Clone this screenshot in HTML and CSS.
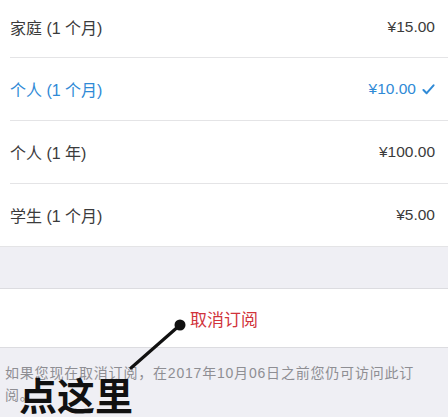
FILE: index.html
```html
<!DOCTYPE html>
<html lang="zh-CN">

<head>
    <meta charset="UTF-8">
    <meta name="viewport" content="width=device-width, initial-scale=1.0">
    <title>订阅</title>
    <link rel="stylesheet" href="styles.css">
</head>

<body>
    <!-- Plan list -->
    <ul class="plan-list">
        <li class="plan">
            <span class="plan-name">家庭 (1 个月)</span>
            <span class="plan-price">¥15.00</span>
        </li>
        <li class="plan selected">
            <span class="plan-name">个人 (1 个月)</span>
            <span class="plan-price">¥10.00
                <svg class="check" viewBox="0 0 14 12" width="13" height="11">
                    <path d="M1.5 6.5 L5 10 L12.5 1.5" fill="none" stroke="#2f8ad6" stroke-width="2.2" stroke-linecap="round" stroke-linejoin="round"/>
                </svg>
            </span>
        </li>
        <li class="plan">
            <span class="plan-name">个人 (1 年)</span>
            <span class="plan-price">¥100.00</span>
        </li>
        <li class="plan">
            <span class="plan-name">学生 (1 个月)</span>
            <span class="plan-price">¥5.00</span>
        </li>
    </ul>

    <div class="spacer"></div>

    <!-- Cancel button -->
    <div class="cancel-row">
        <span class="cancel-text">取消订阅</span>
    </div>

    <p class="note">如果您现在取消订阅，在2017年10月06日之前您仍可访问此订阅。</p>

    <!-- Annotation overlay -->
    <svg class="pointer" viewBox="0 0 448 417" width="448" height="417">
        <line x1="180" y1="325" x2="131" y2="368" stroke="#111" stroke-width="3.2" stroke-linecap="round"/>
        <circle cx="180" cy="325" r="5.5" fill="#111"/>
    </svg>
    <div class="callout">点这里</div>
</body>

</html>
```

FILE: styles.css
```css
body {
    font-family: "Liberation Sans", "Noto Sans CJK SC", sans-serif;
    margin: 0;
    padding: 0;
    background-color: #efeff4;
    color: #3b3b3b;
    width: 448px;
    height: 417px;
    overflow: hidden;
    position: relative;
}

.plan-list {
    list-style: none;
    margin: -4px 0 0 0;
    padding: 0 0 0 10px;
    background-color: #fff;
}

.plan {
    display: flex;
    align-items: center;
    justify-content: space-between;
    height: 62px;
    padding-right: 13px;
    border-bottom: 1px solid #e4e4e6;
    box-sizing: border-box;
    font-size: 16px;
}

.plan:nth-child(2),
.plan:nth-child(3) {
    height: 63px;
}

.plan:last-child {
    border-bottom: none;
}

.plan-price {
    font-size: 15.5px;
    display: flex;
    align-items: center;
    gap: 6px;
}

.selected {
    color: #2f8ad6;
}

.spacer {
    height: 42px;
    border-top: 1px solid #e4e4e6;
    box-sizing: border-box;
}

.cancel-row {
    height: 60px;
    background-color: #fff;
    border-top: 1px solid #dcdce0;
    border-bottom: 1px solid #dcdce0;
    box-sizing: border-box;
    display: flex;
    align-items: center;
    justify-content: center;
}

.cancel-text {
    color: #d1333b;
    font-size: 17px;
}

.note {
    margin: 0;
    padding: 14px 20px 0 5px;
    font-size: 14px;
    line-height: 22px;
    color: #8e8e93;
    letter-spacing: 0.8px;
}

.pointer {
    position: absolute;
    left: 0;
    top: 0;
}

.callout {
    position: absolute;
    left: 19px;
    top: 368px;
    font-family: "Noto Sans CJK SC", sans-serif;
    font-size: 38px;
    font-weight: 700;
    line-height: 52px;
    color: #111;
}
```
